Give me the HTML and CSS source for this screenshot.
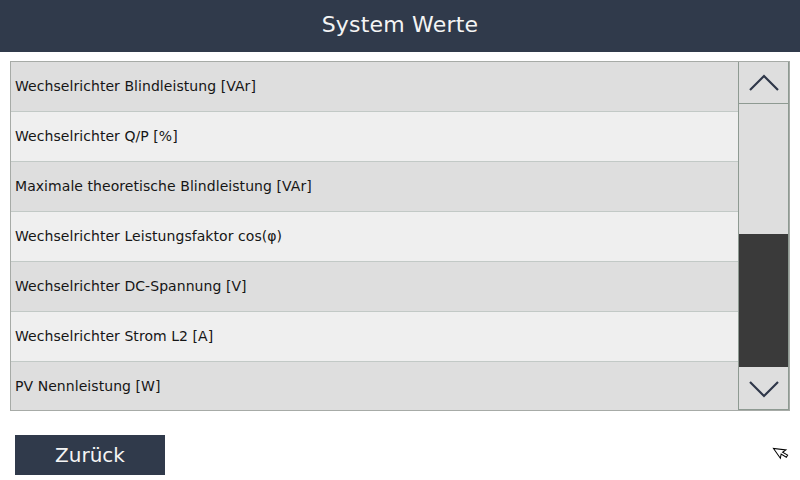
FILE: index.html
```html
<!DOCTYPE html>
<html>
<head>
<meta charset="utf-8">
<link rel="stylesheet" href="styles.css">
</head>
<body>
<header class="topbar"><h1 class="title">System Werte</h1></header>
<main class="content">
  <div class="listbox">
    <ul class="rows">
      <li class="row dark">Wechselrichter Blindleistung [VAr]</li>
      <li class="row light">Wechselrichter Q/P [%]</li>
      <li class="row dark">Maximale theoretische Blindleistung [VAr]</li>
      <li class="row light">Wechselrichter Leistungsfaktor cos(φ)</li>
      <li class="row dark">Wechselrichter DC-Spannung [V]</li>
      <li class="row light">Wechselrichter Strom L2 [A]</li>
      <li class="row dark last">PV Nennleistung [W]</li>
    </ul>
    <div class="scrollbar">
      <div class="sbtn up"><svg width="32" height="20" viewBox="0 0 32 20"><polyline points="2,16 16,2 30,16" fill="none" stroke="#2f3749" stroke-width="2.2"/></svg></div>
      <div class="track"><div class="spacer"></div><div class="thumb"></div></div>
      <div class="sbtn down"><svg width="32" height="20" viewBox="0 0 32 20"><polyline points="2,4 16,18 30,4" fill="none" stroke="#2f3749" stroke-width="2.2"/></svg></div>
    </div>
  </div>
  <div class="footer">
    <button class="back">Zurück</button>
  </div>
</main>
<svg class="cursor" width="18" height="18" viewBox="0 0 18 18"><path d="M0 0 L0 12 L3 9 L5.5 14.5 L7.8 13.5 L5.3 8.3 L9.3 8.3 Z" transform="translate(1.5 1.5) rotate(-35)" fill="#fff" stroke="#000" stroke-width="1"/></svg>
</body>
</html>
```

FILE: styles.css
```css
* { box-sizing: border-box; }
html, body { margin: 0; padding: 0; }
body {
  width: 800px;
  height: 480px;
  background: #ffffff;
  font-family: "DejaVu Sans", sans-serif;
  position: relative;
  overflow: hidden;
}
.topbar {
  height: 52px;
  background: #303a4b;
  display: flex;
  align-items: center;
  justify-content: center;
  padding-bottom: 4px;
}
.title {
  margin: 0;
  color: #f4f4f4;
  font-weight: normal;
  font-size: 22px;
  letter-spacing: 0.2px;
}
.content {
  padding: 9px 10px 0 10px;
}
.listbox {
  display: flex;
  width: 780px;
  height: 350px;
  border: 1px solid #a7aba7;
  background: #dedede;
}
.rows {
  list-style: none;
  margin: 0;
  padding: 0;
  flex: 1;
  display: flex;
  flex-direction: column;
}
.row {
  height: 50px;
  border-bottom: 1px solid #c2c9c6;
  display: flex;
  align-items: center;
  padding-left: 4px;
  padding-bottom: 2px;
  font-size: 14px;
  letter-spacing: 0.06px;
  color: #161616;
}
.row.last { border-bottom: none; height: 48px; padding-bottom: 0; }
.row.dark { background: #dedede; }
.row.light { background: #efefef; }
.scrollbar {
  width: 51px;
  display: flex;
  flex-direction: column;
  border-left: 1px solid #8e9a92;
  border-right: 1px solid #8e9a92;
  background: #dedede;
}
.sbtn {
  height: 42px;
  display: flex;
  align-items: center;
  justify-content: center;
  background: #dedede;
}
.sbtn.up { border-bottom: 1px solid #8e9a92; padding-top: 2px; }
.sbtn.down { border-bottom: 1px solid #8e9a92; height: 43px; }
.track {
  flex: 1;
  display: flex;
  flex-direction: column;
}
.spacer { height: 130px; background: #dedede; }
.thumb { flex: 1; background: #3a3a3a; }
.footer {
  padding: 24px 0 0 5px;
}
.back {
  width: 150px;
  height: 40px;
  border: none;
  background: #303a4b;
  color: #f4f4f4;
  font-family: "DejaVu Sans", sans-serif;
  font-size: 20px;
  padding: 0;
}
.cursor {
  position: absolute;
  left: 772px;
  top: 447px;
}
```
